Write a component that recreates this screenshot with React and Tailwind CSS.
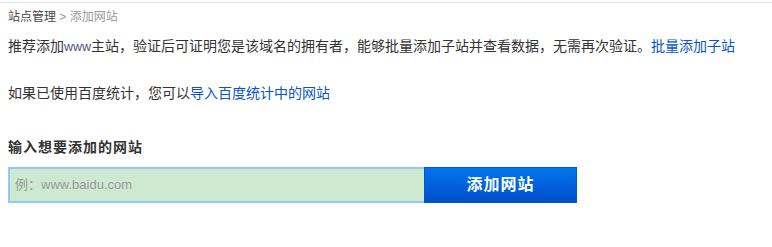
export default function App() {
  const font = { fontFamily: '"Liberation Sans", Arial, "Noto Sans CJK SC", sans-serif' };
  return (
    <div className="w-[772px] h-[247px] bg-white text-[#333]" style={font}>
      <div className="h-[2px]" />
      <div className="border-t border-[#e6e6e6] pl-2">
        <div className="text-[12px] leading-[28px]">
          <span className="text-[#444]">站点管理</span>
          <span className="text-[#999]"> &gt; 添加网站</span>
        </div>
        <div className="text-[14px] leading-[30px]">
          推荐添加<span className="text-[12.5px] text-[#4a5678]">www</span>主站，验证后可证明您是该域名的拥有者，能够批量添加子站并查看数据，无需再次验证。
          <a className="text-[#0654c8]" href="#">批量添加子站</a>
        </div>
        <div className="mt-[16px] text-[14px] leading-[30px]">
          如果已使用百度统计，您可以<a className="text-[#0654c8]" href="#">导入百度统计中的网站</a>
        </div>
        <div className="mt-[24px] text-[14px] leading-[30px] font-bold tracking-[1px]">输入想要添加的网站</div>
        <div className="mt-[5px] flex">
          <div className="w-[416px] h-[36px] border-2 border-r-0 border-[#91c9f9] bg-[#cde9d0] flex items-center pl-[5px]">
            <span className="text-[13px] text-[#999]">例：www.baidu.com</span>
          </div>
          <button className="w-[153px] h-[36px] border border-[#0058cc] bg-gradient-to-b from-[#0076ec] to-[#004ecb] text-white text-[16px] font-bold tracking-[1px] flex items-center justify-center">
            添加网站
          </button>
        </div>
      </div>
    </div>
  );
}
